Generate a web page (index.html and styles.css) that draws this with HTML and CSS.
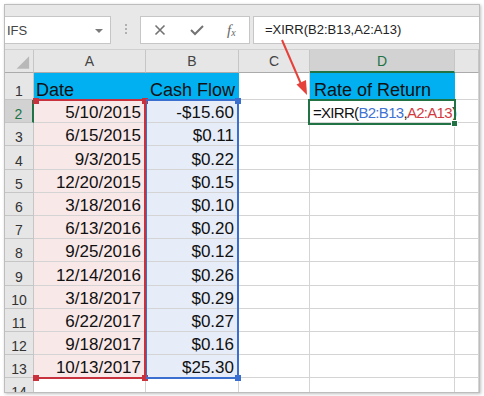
FILE: index.html
```html
<!DOCTYPE html>
<html lang="en">
<head>
    <meta charset="UTF-8">
    <meta name="viewport" content="width=device-width, initial-scale=1.0">
    <title>XIRR - Rate of Return</title>
    <link rel="stylesheet" href="styles.css">
</head>
<body>
    <div class="window">
        <div class="formula-bar">
            <div class="name-box">
                <span>IFS</span>
                <span class="caret"></span>
            </div>
            <div class="grip"><i></i><i></i><i></i></div>
            <div class="fx-buttons">
                <svg width="12" height="12" viewBox="0 0 12 12"><path d="M1.5 1.5 L10.5 10.5 M10.5 1.5 L1.5 10.5" stroke="#737373" stroke-width="1.6" fill="none"/></svg>
                <svg width="14" height="12" viewBox="0 0 14 12"><path d="M1 6 L5 10 L13 2" stroke="#737373" stroke-width="2" fill="none"/></svg>
                <span class="fx">f<sub>x</sub></span>
            </div>
            <div class="formula-input">=XIRR(B2:B13,A2:A13)</div>
        </div>

        <div class="sheet">
            <div class="c corner"><svg width="29" height="23" viewBox="0 0 29 23"><polygon points="12,20 25,20 25,7" fill="#b8b8b8"/></svg></div>
            <div class="c ch">A</div>
            <div class="c ch">B</div>
            <div class="c ch">C</div>
            <div class="c ch active">D</div>
            <div class="c ch"></div>

            <div class="c rh">1</div>
            <div class="c title">Date</div>
            <div class="c title">Cash Flow</div>
            <div class="c"></div>
            <div class="c title">Rate of Return</div>
            <div class="c"></div>

            <div class="c rh active">2</div>
            <div class="c num date">5/10/2015</div>
            <div class="c num cash">-$15.60</div>
            <div class="c"></div>
            <div class="c formula">=XIRR(<span class="ref-b">B2:B13</span>,<span class="ref-a">A2:A13</span>)</div>
            <div class="c"></div>

            <div class="c rh">3</div>
            <div class="c num date">6/15/2015</div>
            <div class="c num cash">$0.11</div>
            <div class="c"></div><div class="c"></div><div class="c"></div>

            <div class="c rh">4</div>
            <div class="c num date">9/3/2015</div>
            <div class="c num cash">$0.22</div>
            <div class="c"></div><div class="c"></div><div class="c"></div>

            <div class="c rh">5</div>
            <div class="c num date">12/20/2015</div>
            <div class="c num cash">$0.15</div>
            <div class="c"></div><div class="c"></div><div class="c"></div>

            <div class="c rh">6</div>
            <div class="c num date">3/18/2016</div>
            <div class="c num cash">$0.10</div>
            <div class="c"></div><div class="c"></div><div class="c"></div>

            <div class="c rh">7</div>
            <div class="c num date">6/13/2016</div>
            <div class="c num cash">$0.20</div>
            <div class="c"></div><div class="c"></div><div class="c"></div>

            <div class="c rh">8</div>
            <div class="c num date">9/25/2016</div>
            <div class="c num cash">$0.12</div>
            <div class="c"></div><div class="c"></div><div class="c"></div>

            <div class="c rh">9</div>
            <div class="c num date">12/14/2016</div>
            <div class="c num cash">$0.26</div>
            <div class="c"></div><div class="c"></div><div class="c"></div>

            <div class="c rh">10</div>
            <div class="c num date">3/18/2017</div>
            <div class="c num cash">$0.29</div>
            <div class="c"></div><div class="c"></div><div class="c"></div>

            <div class="c rh">11</div>
            <div class="c num date">6/22/2017</div>
            <div class="c num cash">$0.27</div>
            <div class="c"></div><div class="c"></div><div class="c"></div>

            <div class="c rh">12</div>
            <div class="c num date">9/18/2017</div>
            <div class="c num cash">$0.16</div>
            <div class="c"></div><div class="c"></div><div class="c"></div>

            <div class="c rh">13</div>
            <div class="c num date">10/13/2017</div>
            <div class="c num cash">$25.30</div>
            <div class="c"></div><div class="c"></div><div class="c"></div>

            <div class="c rh">14</div>
            <div class="c"></div><div class="c"></div><div class="c"></div><div class="c"></div><div class="c"></div>

            <!-- range highlights drawn over the grid -->
            <div class="range range-a">
                <span class="handle tl"></span><span class="handle tr"></span>
                <span class="handle bl"></span><span class="handle br"></span>
            </div>
            <div class="range range-b">
                <span class="handle tr"></span><span class="handle br"></span>
            </div>
            <div class="selection"><span class="fill-handle"></span></div>
        </div>
    </div>

    <svg class="arrow" width="484" height="396" viewBox="0 0 484 396">
        <line x1="282" y1="40" x2="301" y2="84" stroke="#e5413a" stroke-width="2"/>
        <polygon points="307,95 306,80 296.5,84.5" fill="#e5413a"/>
    </svg>
</body>
</html>
```

FILE: styles.css
```css
body {
    margin: 0;
    position: relative;
    font-family: "Liberation Sans", Arial, sans-serif;
    background: #fff;
}
.window {
    margin: 4px;
    width: 476px;
    height: 389px;
    box-sizing: border-box;
    border: 1px solid #bdbdbd;
    box-shadow: 1px 1px 3px rgba(0, 0, 0, 0.25);
    overflow: hidden;
}

/* formula bar */
.formula-bar {
    display: flex;
    align-items: flex-start;
    height: 45px;
    padding-top: 11px;
    box-sizing: border-box;
    background: #e8e8e8;
}
.name-box {
    width: 106px;
    height: 28px;
    box-sizing: border-box;
    background: #fff;
    border: 1px solid #c6c6c6;
    border-left: none;
    display: flex;
    align-items: center;
    justify-content: space-between;
    padding: 1px 7px 0 2px;
    font-size: 13px;
    color: #444;
}
.caret {
    width: 0;
    height: 0;
    border-left: 4px solid transparent;
    border-right: 4px solid transparent;
    border-top: 4px solid #7a7a7a;
}
.grip {
    margin-left: 14px;
    margin-top: 8px;
    display: flex;
    flex-direction: column;
    gap: 2px;
}
.grip i {
    display: block;
    width: 2px;
    height: 2px;
    background: #b0b0b0;
}
.fx-buttons {
    margin-left: 13px;
    width: 110px;
    height: 28px;
    box-sizing: border-box;
    background: #fff;
    border: 1px solid #c6c6c6;
    display: flex;
    align-items: center;
    padding-left: 13px;
    gap: 24px;
}
.fx {
    font-family: "Liberation Serif", "Times New Roman", serif;
    font-style: italic;
    font-size: 15px;
    color: #666;
    margin-left: -1px;
}
.fx sub {
    font-size: 10px;
    vertical-align: -1px;
}
.formula-input {
    flex: 1;
    margin-left: 3px;
    height: 28px;
    box-sizing: border-box;
    background: #fff;
    border: 1px solid #c6c6c6;
    border-right: none;
    padding: 5px 0 0 11px;
    font-size: 13px;
    color: #222;
}

/* grid */
.sheet {
    position: relative;
    display: grid;
    grid-template-columns: 29px 112px 93px 71px 145px 1fr;
    grid-template-rows: 23px 27px repeat(13, 23.2px);
    border-top: 1px solid #d0d0d0;
    margin-top: -1px;
}
.c {
    box-sizing: border-box;
    border-right: 1px solid #d4d4d4;
    border-bottom: 1px solid #d4d4d4;
    display: flex;
    align-items: flex-end;
    padding: 0 4px;
    font-size: 17px;
    line-height: 18px;
    color: #111;
    white-space: nowrap;
    overflow: hidden;
}
.corner {
    padding: 0;
    background: #e6e6e6;
    border-color: #c6c6c6;
    border-bottom-color: #ababab;
}
.ch {
    background: #e6e6e6;
    border-color: #c6c6c6;
    border-bottom-color: #ababab;
    align-items: center;
    justify-content: center;
    font-size: 14px;
    color: #444;
}
.ch.active {
    background: #d2d2d2;
    color: #217346;
    border-bottom: 2px solid #217346;
}
.rh {
    background: #e6e6e6;
    border-color: #c6c6c6;
    justify-content: center;
    font-size: 14px;
    line-height: 16px;
    color: #333;
}
.rh.active {
    background: #d2d2d2;
    color: #217346;
    border-right: 2px solid #217346;
}
.title {
    background: #00b0f0;
    font-size: 18px;
    line-height: 17px;
    border-color: #00b0f0;
    border-bottom-color: #d4d4d4;
}
.title:nth-child(8) {
    padding-left: 2px;
}
.num {
    justify-content: flex-end;
}
.date {
    background: #f9e8e8;
}
.cash {
    background: #e7edf8;
}
.formula {
    padding-left: 3px;
    font-size: 15px;
    letter-spacing: -0.7px;
    overflow: visible;
}
.ref-b {
    color: #3f72d2;
}
.ref-a {
    color: #d23a3e;
}

/* overlays */
.range {
    position: absolute;
    top: 49px;
    height: 280px;
    box-sizing: border-box;
    border: 2px solid;
}
.range-a {
    left: 28px;
    width: 113px;
    border-color: #c8323c;
    border-left-color: transparent;
}
.range-b {
    left: 141px;
    width: 93px;
    border-color: #3b6fcf;
    border-left-width: 1px;
}
.handle {
    position: absolute;
    width: 6px;
    height: 6px;
}
.range-a .handle {
    background: #c8323c;
}
.range-b .handle {
    background: #3b6fcf;
}
.handle.tl { left: -2px; top: -3px; }
.handle.tr { right: -4px; top: -3px; }
.handle.bl { left: -2px; bottom: -4px; }
.handle.br { right: -4px; bottom: -4px; }
.selection {
    position: absolute;
    left: 303px;
    top: 49px;
    width: 148px;
    height: 26px;
    box-sizing: border-box;
    border: 2px solid #217346;
}
.fill-handle {
    position: absolute;
    right: -4px;
    bottom: -4px;
    width: 5px;
    height: 5px;
    background: #217346;
    border: 1px solid #fff;
}
.arrow {
    position: absolute;
    left: 0;
    top: 0;
    pointer-events: none;
}
```
